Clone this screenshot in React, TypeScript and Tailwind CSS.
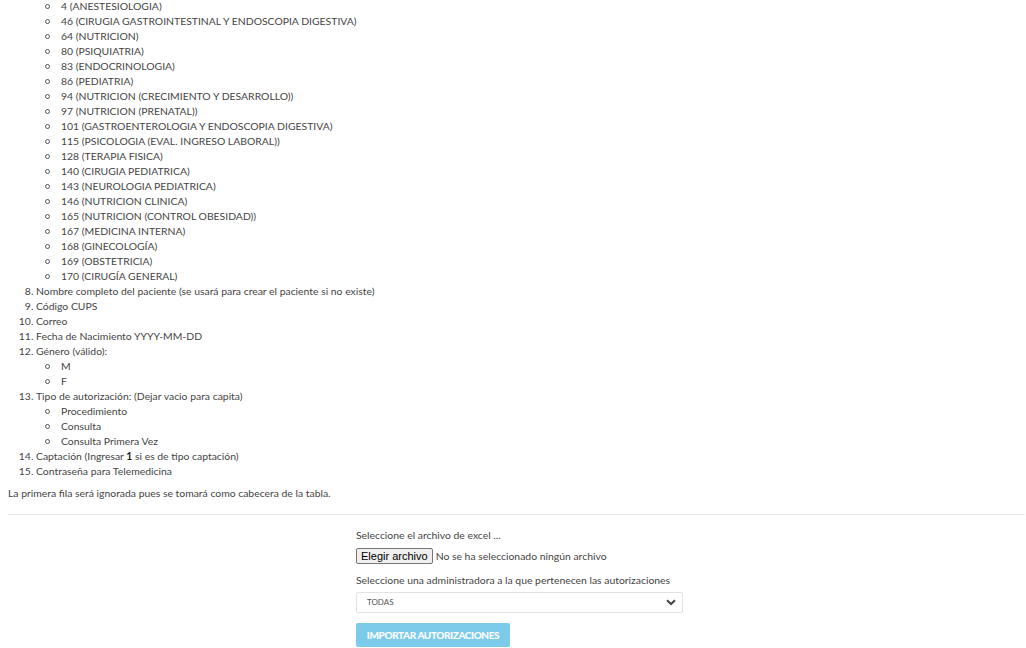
import React from "react";

const esp = [
  "4 (ANESTESIOLOGIA)",
  "46 (CIRUGIA GASTROINTESTINAL Y ENDOSCOPIA DIGESTIVA)",
  "64 (NUTRICION)",
  "80 (PSIQUIATRIA)",
  "83 (ENDOCRINOLOGIA)",
  "86 (PEDIATRIA)",
  "94 (NUTRICION (CRECIMIENTO Y DESARROLLO))",
  "97 (NUTRICION (PRENATAL))",
  "101 (GASTROENTEROLOGIA Y ENDOSCOPIA DIGESTIVA)",
  "115 (PSICOLOGIA (EVAL. INGRESO LABORAL))",
  "128 (TERAPIA FISICA)",
  "140 (CIRUGIA PEDIATRICA)",
  "143 (NEUROLOGIA PEDIATRICA)",
  "146 (NUTRICION CLINICA)",
  "165 (NUTRICION (CONTROL OBESIDAD))",
  "167 (MEDICINA INTERNA)",
  "168 (GINECOLOGÍA)",
  "169 (OBSTETRICIA)",
  "170 (CIRUGÍA GENERAL)",
];

function Sub({ items }: { items: string[] }) {
  return (
    <ul className="list-none">
      {items.map((t) => (
        <li key={t} className="h-[15px] flex items-center whitespace-nowrap">
          <span className="ml-[9px] mr-[11px] w-[5px] h-[5px] rounded-full border border-[#555] shrink-0" />
          <span>{t}</span>
        </li>
      ))}
    </ul>
  );
}

export default function App() {
  return (
    <div
      className="bg-white text-[10.4px] leading-[15px] text-[#444] pl-[8px] h-[648px] overflow-hidden"
      style={{ fontFamily: "Lato, 'Noto Sans', sans-serif" }}
    >
      <ol className="list-decimal pl-[28px] -mt-[1px]" start={7}>
        <li className="list-none">
          <Sub items={esp} />
        </li>
        <li className="h-[15px]">Nombre completo del paciente (se usará para crear el paciente si no existe)</li>
        <li className="h-[15px]">Código CUPS</li>
        <li className="h-[15px]">Correo</li>
        <li className="h-[15px]">Fecha de Nacimiento YYYY-MM-DD</li>
        <li>
          Género (válido):
          <Sub items={["M", "F"]} />
        </li>
        <li>
          Tipo de autorización: (Dejar vacio para capita)
          <Sub items={["Procedimiento", "Consulta", "Consulta Primera Vez"]} />
        </li>
        <li className="h-[15px]">
          Captación (Ingresar <b className="font-bold text-[#222]">1</b> si es de tipo captación)
        </li>
        <li className="h-[15px]">Contraseña para Telemedicina</li>
      </ol>
      <p className="mt-[7px]">La primera fila será ignorada pues se tomará como cabecera de la tabla.</p>
      <div className="mt-[13px] mr-[1px] border-t border-[#e8e8e8]" />
      <div className="pt-[13px] pl-[348px]">
        <div className="w-[327px]">
          <div className="h-[15px]">Seleccione el archivo de excel ...</div>
          <div className="mt-[5px] flex items-center gap-[3px]">
            <button
              className="h-[16px] px-[4px] border border-[#767676] rounded-[2px] bg-[#efefef] text-[11px] leading-[14px] text-black"
              style={{ fontFamily: "'Liberation Sans', Arial, sans-serif" }}
            >
              Elegir archivo
            </button>
            <span>No se ha seleccionado ningún archivo</span>
          </div>
          <div className="mt-[9px] h-[15px]">Seleccione una administradora a la que pertenecen las autorizaciones</div>
          <div className="mt-[4px] h-[21px] border border-[#e2e2e2] rounded-[2px] flex items-center justify-between pl-[10px] pr-[6px]">
            <span className="text-[8px] text-[#555]">TODAS</span>
            <svg width="10" height="7" viewBox="0 0 10 7">
              <path d="M1 1.2 L5 5 L9 1.2" fill="none" stroke="#444" strokeWidth="2" />
            </svg>
          </div>
          <button className="mt-[10px] h-[24px] w-[154px] rounded-[2px] bg-[#7ccbea] text-white font-black text-[10px] tracking-[-0.4px]">
            IMPORTAR AUTORIZACIONES
          </button>
        </div>
      </div>
    </div>
  );
}
